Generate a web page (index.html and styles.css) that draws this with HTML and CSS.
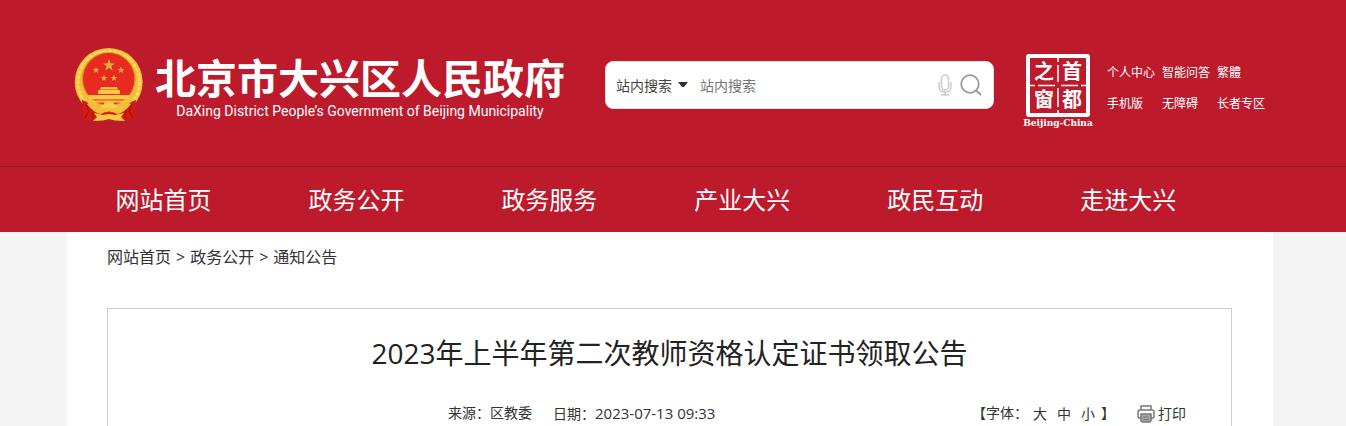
FILE: index.html
```html
<!DOCTYPE html>
<html lang="zh-CN">
<head>
  <meta charset="UTF-8" />
  <meta name="viewport" content="width=device-width, initial-scale=1.0"/>
  <title>2023年上半年第二次教师资格认定证书领取公告</title>
  <link rel="stylesheet" href="styles.css">
</head>
<body>

  <header class="header">
    <div class="wrap header-inner">
      <a class="logo" href="#">
        <svg class="emblem" viewBox="0 0 78 80" aria-hidden="true">
          <circle cx="38.7" cy="37" r="34" fill="#f3bd3a"/>
          <circle cx="38.7" cy="37" r="31" fill="none" stroke="#fbd75a" stroke-width="3" stroke-dasharray="4 1"/>
          <ellipse cx="38.7" cy="34" rx="27" ry="27" fill="#d99a28"/>
          <ellipse cx="38.7" cy="34" rx="25.7" ry="26" fill="#e82a20"/>
          <g fill="#e3ae38">
            <path d="M39 14l1.500 4.300 4.500.1-3.600 2.700 1.300 4.400-3.700-2.600-3.700 2.600 1.300-4.400-3.600-2.700 4.500-.1z"/>
            <path id="star" d="M26 21.500l.9 2.400 2.500.1-2 1.600.7 2.400-2.100-1.400-2.100 1.400.7-2.400-2-1.600 2.500-.1z"/>
            <use href="#star" x="25"/>
            <use href="#star" x="8" y="8"/>
            <use href="#star" x="18" y="8"/>
          </g>
          <path d="M31 42h16l1 2.500H30zM28 45h22v4H28zM18 50h42l-1 4.500H19zM21 55.500h36l-3 2H24z" fill="#fbc943"/>
          <path d="M12 55q7 2 13 9 14 4 28 0 6-7 13-9l-1 12 1 7-7 1-7-1-13 2-13-2-7 1-7-1 1-7z" fill="#d31a14"/>
          <path d="M16 59l3 7-4 7M62 59l-3 7 4 7M22 64l1 10M56 64l-1 10" stroke="#a01612" stroke-width="1.200" fill="none"/>
          <path d="M21 57q7 7 12 8h12q5-1 12-8l4 2q-6 8-13 10l-9-2-9 2q-7-2-13-10z" fill="#f3bd3a"/>
          <path d="M32 63l-1-3 3-.5.500-2.500 3 .5 1.500-1.500 1.500 1.500 3-.5.500 2.500 3 .5-1 3z" fill="#f6cf4c"/>
          <path d="M24 68l9 2 6-1 6 1 9-2-3 4 4 4-10-.5-6-1.500-6 1.500-10 .5 4-4z" fill="#fbc943"/>
          <path d="M33 68.500q6-3 12 0" stroke="#c9261a" stroke-width="1.200" fill="none"/>
        </svg>
        <span class="logo-text">
          <strong>北京市大兴区人民政府</strong>
          <span>DaXing District People’s Government of Beijing Municipality</span>
        </span>
      </a>

      <form class="search">
        <select aria-label="搜索范围">
          <option>站内搜索</option>
        </select>
        <svg class="caret" viewBox="0 0 10 6" aria-hidden="true"><path d="M0 0h10L6 5H4z" fill="#333"/></svg>
        <input type="text" placeholder="站内搜索" aria-label="搜索关键词">
        <button type="button" aria-label="语音搜索">
          <svg width="14" height="22" viewBox="0 0 14 22" fill="none" stroke="#cbcbcb" stroke-width="1.500">
            <rect x="3.500" y="1" width="7" height="15" rx="3.500"/>
            <path d="M1 8v5c0 3 2.500 5 6 5s6-2 6-5V8M7 18v3M3 21h8"/>
          </svg>
        </button>
        <button type="submit" aria-label="搜索">
          <svg width="22" height="22" viewBox="0 0 22 22" fill="none" stroke="#999" stroke-width="1.800">
            <circle cx="10" cy="10" r="8.800"/>
            <path d="M16 16.500l5 4.500"/>
          </svg>
        </button>
      </form>

      <a class="capital" href="#" aria-label="首都之窗">
        <svg viewBox="0 0 70 74">
          <rect x="5" y="2" width="60" height="59" rx="1" fill="none" stroke="#fff" stroke-width="4"/>
          <path d="M35 4v4M35 11v17M35 34v19M35 56v4M7 31.500h5M15 31.500h17M38 31.500h17M58 31.500h6" stroke="#fff" stroke-width="1.500"/>
          <g class="seal">
            <text x="21" y="25">之</text>
            <text x="49" y="25">首</text>
            <text x="21" y="53">窗</text>
            <text x="49" y="53">都</text>
          </g>
          <text class="seal-en" x="35" y="72">Beijing-China</text>
        </svg>
      </a>

      <div class="top-links">
        <a href="#">个人中心</a>
        <a href="#">智能问答</a>
        <a href="#">繁體</a>
        <a href="#">手机版</a>
        <a href="#">无障碍</a>
        <a href="#">长者专区</a>
      </div>
    </div>
  </header>

  <nav class="nav">
    <ul class="wrap">
      <li><a href="#">网站首页</a></li>
      <li><a href="#">政务公开</a></li>
      <li><a href="#">政务服务</a></li>
      <li><a href="#">产业大兴</a></li>
      <li><a href="#">政民互动</a></li>
      <li><a href="#">走进大兴</a></li>
    </ul>
  </nav>

  <main class="main">
    <div class="wrap content">
      <div class="crumbs">
        <a href="#">网站首页</a>
        <span>&gt;</span>
        <a href="#">政务公开</a>
        <span>&gt;</span>
        <a href="#">通知公告</a>
      </div>

      <article class="article">
        <h1>2023年上半年第二次教师资格认定证书领取公告</h1>
        <div class="meta">
          <div class="source">
            <span>来源：区教委</span>
            <span>日期：<time>2023-07-13 09:33</time></span>
          </div>
          <div class="tools">
            <div class="font-size">
              <span>【字体：</span>
              <button type="button">大</button>
              <button type="button">中</button>
              <button type="button">小</button>
            </div>
            <span>】</span>
            <button type="button" class="print">
              <svg width="18" height="18" viewBox="0 0 18 18" fill="none" stroke="#777" stroke-width="1.500" aria-hidden="true">
                <path d="M4 5V1h10v4"/>
                <path d="M4 13H2.500Q1 13 1 11.500V7q0-2 2-2h12q2 0 2 2v4.500q0 1.500-1.500 1.500H14"/>
                <path d="M4 9h10v6q0 2-2 2H6q-2 0-2-2z" fill="#aaa"/>
                <path d="M6 12h6M6 14.500h6" stroke-width="1"/>
              </svg>
              打印
            </button>
          </div>
        </div>
      </article>
    </div>
  </main>

</body>
</html>
```

FILE: styles.css
```css
* {
  box-sizing: border-box;
}

body {
  display: flex;
  flex-direction: column;
  min-height: 100vh;
  margin: 0;
  background: #f4f4f4;
  color: #333;
  font-family: "Open Sans", "Noto Sans CJK SC", sans-serif;
  font-size: 14px;
}

a {
  color: inherit;
  text-decoration: none;
}

button {
  padding: 0;
  border: 0;
  background: none;
  color: inherit;
  font: inherit;
  cursor: pointer;
}

svg {
  display: block;
}

.header,
.nav,
.main {
  padding-right: 6px;
}

.wrap {
  width: 100%;
  max-width: 1206px;
  margin: 0 auto;
}

/* header */
.header {
  background: #bd1a2c;
  color: #fff;
}

.header-inner {
  display: flex;
  align-items: center;
  height: 166px;
  padding: 4px 0 0 3px;
}

.logo {
  display: flex;
  align-items: center;
  white-space: nowrap;
}

.emblem {
  width: 78px;
  height: 80px;
}

.logo-text {
  display: flex;
  flex-direction: column;
  align-items: center;
  margin-left: 7px;
}

.logo-text strong {
  font-family: "Noto Sans CJK SC", sans-serif;
  font-size: 41px;
  line-height: 52px;
}

.logo-text span {
  font-family: Roboto, sans-serif;
  font-size: 14px;
  line-height: 18px;
}

/* search box */
.search {
  display: flex;
  align-items: center;
  flex: 0 1 389px;
  height: 48px;
  margin-left: 40px;
  padding: 0 11px 0 10px;
  border: 1px solid #ddd;
  border-radius: 8px;
  background: #fff;
}

.search select,
.search input {
  padding: 0;
  border: 0;
  outline: 0;
  background: none;
  color: #444;
  font-family: "Noto Sans CJK SC", sans-serif;
  font-size: 14px;
}

.search select {
  appearance: none;
  width: 62px;
}

.search input {
  flex: 1;
  min-width: 0;
  margin-left: 12px;
}

.search input::placeholder {
  color: #757575;
}

.search button + button {
  margin-left: 8px;
}

.caret {
  width: 10px;
  height: 6px;
}

/* right side of the header */
.capital {
  flex: none;
  width: 70px;
  margin-left: 29px;
  padding-top: 12px;
}

.seal {
  fill: #fff;
  font-family: "Noto Sans CJK SC", sans-serif;
  font-size: 20px;
  font-weight: bold;
  text-anchor: middle;
}

.seal-en {
  fill: #fff;
  font-family: "DejaVu Serif", serif;
  font-size: 9px;
  font-weight: bold;
  text-anchor: middle;
}

.top-links {
  display: grid;
  grid-template-columns: repeat(3, 55px);
  margin-left: 14px;
  padding-top: 6px;
  font-size: 12px;
  line-height: 31px;
  white-space: nowrap;
}

/* main menu */
.nav {
  border-top: 1px solid #8f1a22;
  background: #bd1a2c;
  color: #fff;
}

.nav ul {
  display: flex;
  padding: 0;
  list-style: none;
}

.nav li {
  width: 16%;
  font-size: 24px;
  line-height: 65px;
  text-align: center;
}

/* page content */
.main {
  display: flex;
  flex: 1;
}

.content {
  display: flex;
  flex-direction: column;
  padding: 0 41px 0 40px;
  background: #fff;
}

.crumbs {
  display: flex;
  gap: 5px;
  font-size: 16px;
  line-height: 50px;
}

.article {
  flex: 1;
  margin-top: 26px;
  border: 1px solid #ccc;
  border-bottom: 0;
}

.article h1 {
  margin: 24px 0 30px;
  color: #222;
  font-size: 28px;
  font-weight: normal;
  line-height: 40px;
  text-align: center;
}

.meta {
  display: flex;
  justify-content: space-between;
  padding: 0 45px 0 340px;
  line-height: 20px;
}

.source {
  display: flex;
  gap: 21px;
}

.source time {
  font-size: 15px;
}

.tools {
  display: flex;
  gap: 6px;
}

.font-size {
  display: flex;
  gap: 10px;
}

.font-size span {
  margin-right: -5px;
}

.print {
  display: flex;
  align-items: center;
  gap: 3px;
  margin-left: 16px;
}
```
